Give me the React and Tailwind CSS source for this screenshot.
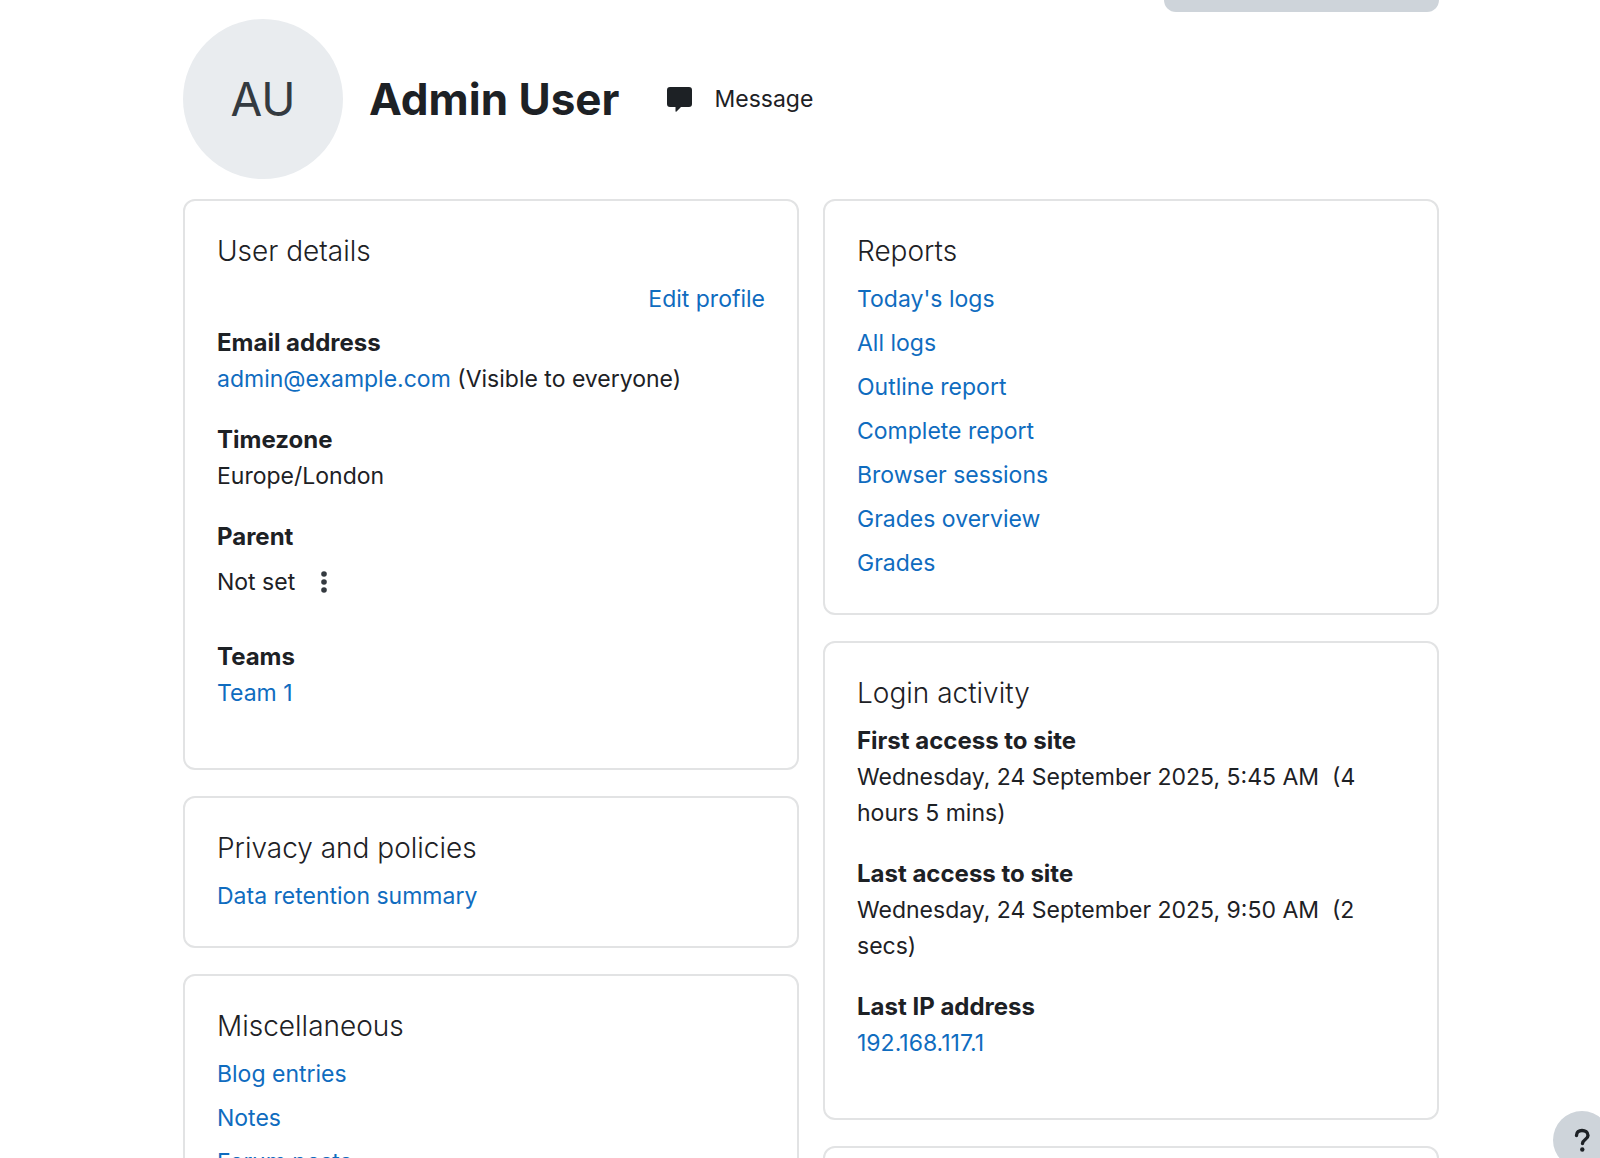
import React from 'react';

const reports = [
  "Today's logs",
  'All logs',
  'Outline report',
  'Complete report',
  'Browser sessions',
  'Grades overview',
  'Grades',
];

const miscellaneous = ['Blog entries', 'Notes', 'Forum posts'];

function TextLink({ children }) {
  return (
    <a href="#" className="text-[#0f6cbf] hover:underline">
      {children}
    </a>
  );
}

function Card({ title, children }) {
  return (
    <section className="rounded-xl border-2 border-[#e2e3e4] p-8">
      {title && <h3 className="mb-3 text-[28px] leading-9 font-light">{title}</h3>}
      {children}
    </section>
  );
}

function LinkList({ items }) {
  return (
    <ul className="flex flex-col gap-2">
      {items.map((item) => (
        <li key={item}>
          <TextLink>{item}</TextLink>
        </li>
      ))}
    </ul>
  );
}

function Detail({ label, children }) {
  return (
    <dl className="mb-[25px]">
      <dt className="text-[24px] leading-9 font-bold">{label}</dt>
      <dd>{children}</dd>
    </dl>
  );
}

export default function App() {
  return (
    <div className="h-screen overflow-hidden bg-white pr-[161px] pl-[183px] font-['Inter',sans-serif] text-[23px] leading-9 text-[#1d2125]">
      {/* Bottom edge of the page action that is scrolled out of view */}
      <div className="flex justify-end">
        <button aria-label="Page action" className="h-3 w-[275px] rounded-b-xl bg-[#ced4da]" />
      </div>

      <header className="mt-[7px] mb-5 flex items-center">
        <div className="flex size-40 shrink-0 items-center justify-center rounded-full bg-[#e9ecef] text-[46px] text-[#343a40]">
          AU
        </div>
        <h1 className="ml-[26px] text-[44px] leading-[56px] font-bold">Admin User</h1>
        <button className="ml-12 flex items-center gap-[22px]">
          <svg className="size-[25px]" viewBox="0 0 25 25" fill="currentColor" aria-hidden="true">
            <path d="M3 0h19a3 3 0 0 1 3 3v14a3 3 0 0 1-3 3h-8l-4.500 4.500q-1 .8-1-.4v-4.100H3a3 3 0 0 1-3-3v-14a3 3 0 0 1 3-3z" />
          </svg>
          Message
        </button>
      </header>

      <main className="grid grid-cols-2 gap-6">
        <div className="flex flex-col gap-[26px]">
          <Card title="User details">
            <div className="mb-2 text-right">
              <TextLink>Edit profile</TextLink>
            </div>
            <Detail label="Email address">
              <TextLink>admin@example.com</TextLink> (Visible to everyone)
            </Detail>
            <Detail label="Timezone">Europe/London</Detail>
            <Detail label="Parent">
              <div className="flex h-[59px] items-start">
                <span className="py-[9px]">Not set</span>
                <button aria-label="Edit parent" className="ml-[25px] flex h-[54px] items-center">
                  <svg className="h-[22px] w-[8px]" viewBox="0 0 8 22" fill="#343a40" aria-hidden="true">
                    <circle cx="4" cy="3" r="2.800" />
                    <circle cx="4" cy="11" r="2.800" />
                    <circle cx="4" cy="19" r="2.800" />
                  </svg>
                </button>
              </div>
            </Detail>
            <Detail label="Teams">
              <TextLink>Team 1</TextLink>
            </Detail>
          </Card>

          <Card title="Privacy and policies">
            <LinkList items={['Data retention summary']} />
          </Card>

          <Card title="Miscellaneous">
            <LinkList items={miscellaneous} />
          </Card>
        </div>

        <div className="flex flex-col gap-[26px]">
          <Card title="Reports">
            <LinkList items={reports} />
          </Card>

          <Card title="Login activity">
            <Detail label="First access to site">
              Wednesday, 24 September 2025, 5:45 AM&nbsp; (4 hours 5 mins)
            </Detail>
            <Detail label="Last access to site">
              Wednesday, 24 September 2025, 9:50 AM&nbsp; (2 secs)
            </Detail>
            <Detail label="Last IP address">
              <TextLink>192.168.117.1</TextLink>
            </Detail>
          </Card>

          <Card />
        </div>
      </main>

      <button
        aria-label="Help"
        className="fixed -right-[11px] -bottom-[11px] flex size-[58px] items-center justify-center rounded-full bg-[#ced4da]"
      >
        <svg className="h-6 w-4" viewBox="0 0 16 24" fill="none" aria-hidden="true">
          <path
            d="M2.500 7.500C2.500 4 5 2.500 8 2.500s6 1.500 6 5c0 4-5.500 4-5.500 8"
            stroke="#1d2125"
            strokeWidth="3.400"
            strokeLinecap="round"
            strokeLinejoin="round"
          />
          <circle cx="8.300" cy="21.500" r="2.200" fill="#1d2125" />
        </svg>
      </button>
    </div>
  );
}
